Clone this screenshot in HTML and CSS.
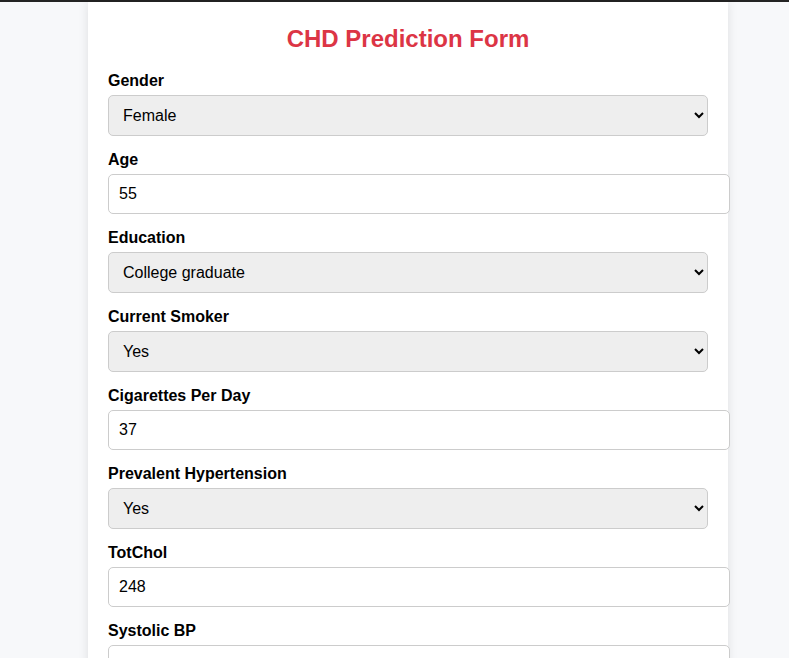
FILE: index.html
```html
<!DOCTYPE html>
<html>
<head>
<meta charset="utf-8">
<link rel="stylesheet" href="styles.css">
</head>
<body>
<div class="topbar"></div>
<div class="card">
  <h2 class="title">CHD Prediction Form</h2>
  <form class="form">
    <label class="lbl">Gender</label>
    <select class="sel"><option>Female</option><option>Male</option></select>
    <label class="lbl">Age</label>
    <input class="inp" type="text" value="55">
    <label class="lbl">Education</label>
    <select class="sel"><option>College graduate</option></select>
    <label class="lbl">Current Smoker</label>
    <select class="sel"><option>Yes</option><option>No</option></select>
    <label class="lbl">Cigarettes Per Day</label>
    <input class="inp" type="text" value="37">
    <label class="lbl">Prevalent Hypertension</label>
    <select class="sel"><option>Yes</option><option>No</option></select>
    <label class="lbl">TotChol</label>
    <input class="inp" type="text" value="248">
    <label class="lbl">Systolic BP</label>
    <input class="inp" type="text" value="">
  </form>
</div>
</body>
</html>
```
FILE: styles.css
```css
html, body {
  margin: 0;
  padding: 0;
}
body {
  background: #f7f8fa;
  font-family: "Liberation Sans", Arial, sans-serif;
  color: #000;
}
.topbar {
  height: 2px;
  background: #232323;
}
.card {
  width: 600px;
  margin-left: 88px;
  padding: 22px 20px 20px;
  background: #fff;
  box-shadow: 0 0 10px rgba(0, 0, 0, 0.1);
}
.title {
  margin: 1px 0 19px;
  text-align: center;
  color: #dc3545;
  font-size: 24px;
  font-weight: bold;
}
.lbl {
  display: block;
  font-weight: bold;
  font-size: 16px;
  margin-bottom: 5px;
}
.sel, .inp {
  display: block;
  width: 100%;
  padding: 10px;
  font-family: "Liberation Sans", Arial, sans-serif;
  font-size: 16px;
  border: 1px solid #ccc;
  border-radius: 5px;
  margin: 0 0 15px;
  color: #000;
}
.sel {
  box-sizing: border-box;
  background-color: #eee;
}
.inp {
  background: #fff;
}
```
